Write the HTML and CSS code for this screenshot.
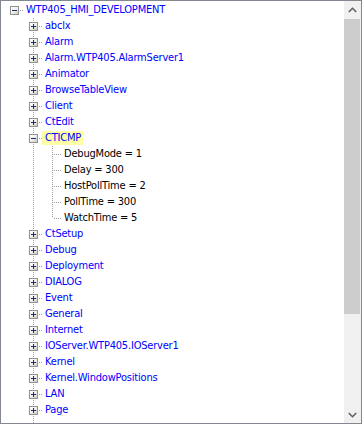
FILE: index.html
```html
<!DOCTYPE html>
<html lang="en">
<head>
    <meta charset="UTF-8">
    <meta name="viewport" content="width=device-width, initial-scale=1.0">
    <title>Project tree</title>
    <link rel="stylesheet" href="styles.css">
</head>
<body>
    <div class="tree">
        <div class="list">
            <div class="row"><span class="g h"><i class="box minus"></i></span><span class="label node">WTP405_HMI_DEVELOPMENT</span></div>

            <div class="row"><span class="g"></span><span class="g t"><i class="box plus"></i></span><span class="label node">abclx</span></div>
            <div class="row"><span class="g"></span><span class="g t"><i class="box plus"></i></span><span class="label node">Alarm</span></div>
            <div class="row"><span class="g"></span><span class="g t"><i class="box plus"></i></span><span class="label node">Alarm.WTP405.AlarmServer1</span></div>
            <div class="row"><span class="g"></span><span class="g t"><i class="box plus"></i></span><span class="label node">Animator</span></div>
            <div class="row"><span class="g"></span><span class="g t"><i class="box plus"></i></span><span class="label node">BrowseTableView</span></div>
            <div class="row"><span class="g"></span><span class="g t"><i class="box plus"></i></span><span class="label node">Client</span></div>
            <div class="row"><span class="g"></span><span class="g t"><i class="box plus"></i></span><span class="label node">CtEdit</span></div>
            <div class="row"><span class="g"></span><span class="g t"><i class="box minus"></i></span><span class="label node selected">CTICMP</span></div>

            <div class="row"><span class="g"></span><span class="g v"></span><span class="g t"></span><span class="label">DebugMode = 1</span></div>
            <div class="row"><span class="g"></span><span class="g v"></span><span class="g t"></span><span class="label">Delay = 300</span></div>
            <div class="row"><span class="g"></span><span class="g v"></span><span class="g t"></span><span class="label">HostPollTime = 2</span></div>
            <div class="row"><span class="g"></span><span class="g v"></span><span class="g t"></span><span class="label">PollTime = 300</span></div>
            <div class="row"><span class="g"></span><span class="g v"></span><span class="g l"></span><span class="label">WatchTime = 5</span></div>

            <div class="row"><span class="g"></span><span class="g t"><i class="box plus"></i></span><span class="label node">CtSetup</span></div>
            <div class="row"><span class="g"></span><span class="g t"><i class="box plus"></i></span><span class="label node">Debug</span></div>
            <div class="row"><span class="g"></span><span class="g t"><i class="box plus"></i></span><span class="label node">Deployment</span></div>
            <div class="row"><span class="g"></span><span class="g t"><i class="box plus"></i></span><span class="label node">DIALOG</span></div>
            <div class="row"><span class="g"></span><span class="g t"><i class="box plus"></i></span><span class="label node">Event</span></div>
            <div class="row"><span class="g"></span><span class="g t"><i class="box plus"></i></span><span class="label node">General</span></div>
            <div class="row"><span class="g"></span><span class="g t"><i class="box plus"></i></span><span class="label node">Internet</span></div>
            <div class="row"><span class="g"></span><span class="g t"><i class="box plus"></i></span><span class="label node">IOServer.WTP405.IOServer1</span></div>
            <div class="row"><span class="g"></span><span class="g t"><i class="box plus"></i></span><span class="label node">Kernel</span></div>
            <div class="row"><span class="g"></span><span class="g t"><i class="box plus"></i></span><span class="label node">Kernel.WindowPositions</span></div>
            <div class="row"><span class="g"></span><span class="g t"><i class="box plus"></i></span><span class="label node">LAN</span></div>
            <div class="row"><span class="g"></span><span class="g t"><i class="box plus"></i></span><span class="label node">Page</span></div>
            <div class="row"><span class="g"></span><span class="g v"></span></div>
        </div>

        <div class="scrollbar">
            <div class="arrow">
                <svg width="9" height="6" viewBox="0 0 9 6"><polyline points="0.8,5 4.5,1.3 8.2,5" fill="none" stroke="#606060" stroke-width="1.6"/></svg>
            </div>
            <div class="track">
                <div class="thumb"></div>
            </div>
            <div class="arrow">
                <svg width="9" height="6" viewBox="0 0 9 6"><polyline points="0.8,1 4.5,4.7 8.2,1" fill="none" stroke="#606060" stroke-width="1.6"/></svg>
            </div>
        </div>
    </div>
</body>
</html>
```

FILE: styles.css
```css
* {
    margin: 0;
    padding: 0;
    box-sizing: border-box;
}

body {
    background-color: #fff;
    font-family: 'DejaVu Sans Condensed', 'DejaVu Sans', sans-serif;
    font-size: 11px;
}

.tree {
    display: flex;
    width: 362px;
    height: 424px;
    border: 1px solid #828790;
    background-color: #fff;
}

.list {
    flex: 1;
    padding: 1px 0 0 3px;
    overflow: hidden;
}

.row {
    display: flex;
    align-items: center;
    height: 16px;
}

/* one indent column of the tree */
.g {
    position: relative;
    flex: 0 0 19px;
    height: 16px;
}

.g.v::before,
.g.t::before,
.g.l::before {
    content: '';
    position: absolute;
    left: 10px;
    top: 0;
    width: 1px;
    height: 16px;
    background: repeating-linear-gradient(to bottom, #a0a0a0 0 1px, transparent 1px 2px);
}

.g.l::before {
    height: 8px;
}

.g.h::after,
.g.t::after,
.g.l::after {
    content: '';
    position: absolute;
    left: 11px;
    top: 8px;
    width: 8px;
    height: 1px;
    background: repeating-linear-gradient(to right, transparent 0 1px, #a0a0a0 1px 2px);
}

.box {
    position: absolute;
    left: 6px;
    top: 4px;
    width: 9px;
    height: 9px;
    border: 1px solid #919191;
    background: linear-gradient(135deg, #fff 0%, #f0f0ee 50%, #c8c8c0 100%);
    z-index: 1;
}

.box::before {
    content: '';
    position: absolute;
    left: 1px;
    top: 3px;
    width: 5px;
    height: 1px;
    background-color: #1f2f66;
}

.box.plus::after {
    content: '';
    position: absolute;
    left: 3px;
    top: 1px;
    width: 1px;
    height: 5px;
    background-color: #1f2f66;
}

.label {
    height: 14px;
    line-height: 14px;
    padding: 0 2px 0 3px;
    white-space: nowrap;
    letter-spacing: -0.2px;
    color: #000;
}

.label.node {
    color: #0000ff;
}

.label.selected {
    background-color: #ffffa8;
}

.scrollbar {
    display: flex;
    flex-direction: column;
    width: 17px;
    background-color: #f0f0f0;
}

.arrow {
    display: flex;
    align-items: center;
    justify-content: center;
    height: 17px;
}

.track {
    flex: 1;
    padding: 1px 1px 0 0;
}

.thumb {
    height: 295px;
    background-color: #cdcdcd;
}
```
